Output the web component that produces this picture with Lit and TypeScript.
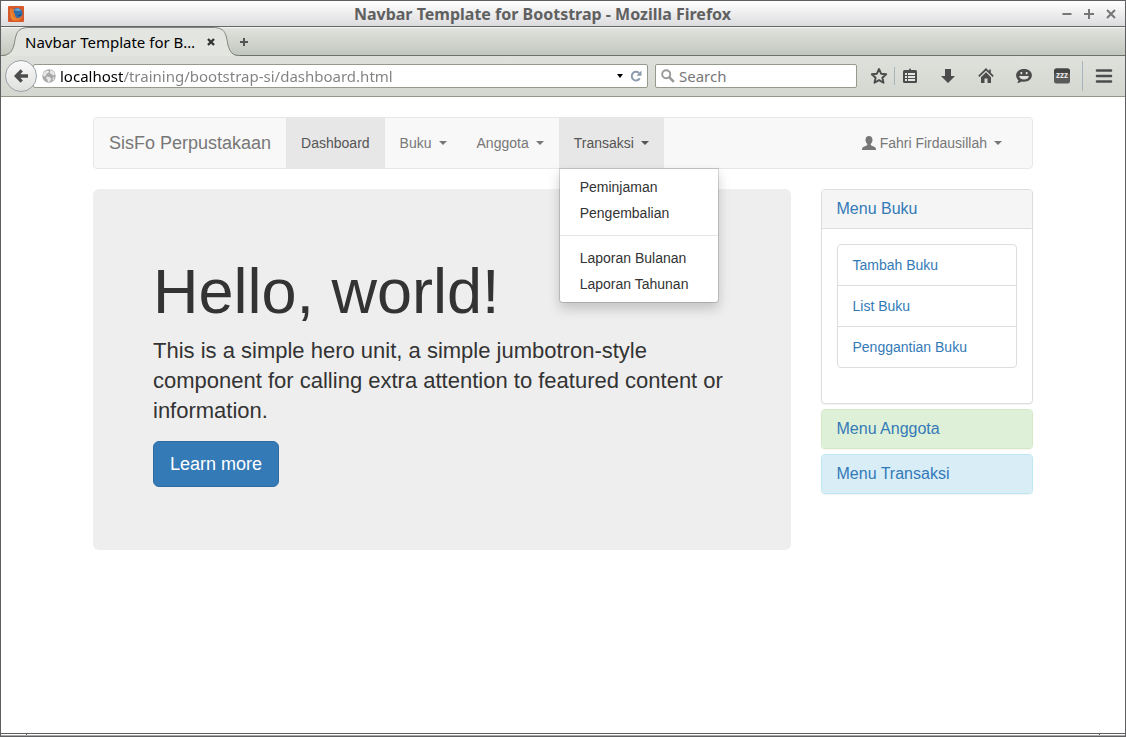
import { LitElement, html, css, svg } from "lit";
import { customElement, property } from "lit/decorators.js";
import { classMap } from "lit/directives/class-map.js";

interface MenuEntry {
  label: string;
  href?: string;
  menu?: boolean;
  state?: "active" | "open";
}

const navEntries: MenuEntry[] = [
  { label: "Dashboard", href: "#dashboard", state: "active" },
  { label: "Buku", menu: true },
  { label: "Anggota", menu: true },
  { label: "Transaksi", menu: true, state: "open" },
];

const transactionGroups = [
  ["Peminjaman", "Pengembalian"],
  ["Laporan Bulanan", "Laporan Tahunan"],
];

const panels = [
  { title: "Menu Buku", tone: "plain", items: ["Tambah Buku", "List Buku", "Penggantian Buku"] },
  { title: "Menu Anggota", tone: "success", items: [] as string[] },
  { title: "Menu Transaksi", tone: "info", items: [] as string[] },
];

const icon = (size: number, body: unknown) =>
  html`<svg width=${size} height=${size} viewBox="0 0 ${size} ${size}" aria-hidden="true">${body}</svg>`;

const icons = {
  back: icon(16, svg`<path d="M7.600 1.200 1 8l6.600 6.800 2.300-2.300L7.300 9.700H15V6.300H7.300l2.600-2.800z" fill="#4c4c4c"/>`),
  globe: icon(14, svg`<circle cx="7" cy="7" r="6.700" fill="#a9a9a9"/><path d="M2 3.500 4.500 1.500l2.500.6-.5 1.600-2 1-.8 2.100L2 7.500.8 6zM8.500 1l3 1.500 1.500 3-2 1-1.500-1.800-1.800-.4zM5 7.500l3 .8 1.200 1.900L7.500 13H6l-.6-2.500L4 9zM11 8.500l1.600-.5-1 3-1.200.6z" fill="#e8e8e8"/>`),
  reload: icon(12, svg`<path d="M9.800 8.300A4.300 4.300 0 1 1 9 3" fill="none" stroke="#8b9bab" stroke-width="2"/><path d="M11.500.5v5.200H6.300z" fill="#8b9bab"/>`),
  search: icon(14, svg`<circle cx="5.200" cy="5.200" r="4" fill="none" stroke="#999" stroke-width="1.900"/><path d="m8.200 8.200 4.600 4.600" stroke="#999" stroke-width="2.600"/>`),
  minimize: icon(12, svg`<path d="M1.500 6h9" stroke="#777" stroke-width="2"/>`),
  maximize: icon(12, svg`<path d="M1 6h10M6 1v10" stroke="#777" stroke-width="2"/>`),
  close: icon(12, svg`<path d="m2 2 8 8M10 2l-8 8" stroke="#777" stroke-width="2"/>`),
  tabClose: icon(8, svg`<path d="m1 1 6 6M7 1 1 7" stroke="#333" stroke-width="2.400"/>`),
  plus: icon(10, svg`<path d="M1 5h8M5 1v8" stroke="#555" stroke-width="2"/>`),
  user: icon(14, svg`<path d="M7 0c2.200 0 3.500 1.500 3.500 3.800 0 1.700-.7 3-1.600 3.900-.4.800-.2 1.400.5 1.700l3.300 1.500c.9.500 1.300 1.100 1.300 3.100H0c0-2 .4-2.600 1.300-3.100l3.300-1.500c.7-.3.900-.9.500-1.700C4.200 6.800 3.500 5.500 3.500 3.800 3.500 1.500 4.800 0 7 0z" fill="#777"/>`),
};

const toolbarIcons = [
  {
    name: "Downloads",
    art: icon(18, svg`<path d="M6 2h6v7h4l-7 7-7-7h4z" fill="#4c4c4c"/>`),
  },
  {
    name: "Home",
    art: icon(18, svg`<path d="m1.800 9.300 7.200-7 7.200 7M13 2.500v4" fill="none" stroke="#4c4c4c" stroke-width="1.700"/><path d="m9 5.200-5 5V16h3.500v-4.500h3V16H14v-5.800z" fill="#4c4c4c"/>`),
  },
  {
    name: "Start a conversation",
    art: icon(18, svg`<path d="M9 2c4.500 0 7.900 2.700 7.900 6.300S13.500 14.800 9 14.800c-.8 0-1.500-.1-2.200-.2-1.300.9-2.800 1.400-4.900 1.300.9-.7 1.400-1.500 1.500-2.700C2 12 1.100 10.300 1.100 8.300 1.100 4.700 4.500 2 9 2z" fill="#4c4c4c"/><path d="M5.500 5h1.700v2.300H5.500zM10.800 5h1.700v2.300h-1.700zM4 9h10c-.5 2.300-2.600 3.600-5 3.600S4.500 11.300 4 9z" fill="#dfe1dc"/>`),
  },
  {
    name: "Sleep tabs",
    art: icon(18, svg`<rect x="1" y="1.500" width="16" height="15" rx="2.500" fill="#5a5a5a"/><path d="M1 7V4a2.500 2.500 0 0 1 2.500-2.500h11A2.500 2.500 0 0 1 17 4v3z" fill="#444"/><text x="9" y="11" text-anchor="middle" font-family="Noto Sans" font-size="8" font-weight="700" fill="#e4e4e4">zzz</text>`),
  },
];

const starArt = icon(18, svg`<path d="m9 2 2.100 4.700 5.100.5-3.800 3.500 1.100 5L9 13.100l-4.500 2.600 1.100-5L1.800 7.200l5.100-.5z" fill="none" stroke="#4c4c4c" stroke-width="1.900" stroke-linejoin="round"/>`);
const clipboardArt = icon(18, svg`<path d="M6 3.500h1.500L9 1l1.500 2.500H12V5H6z" fill="#4c4c4c"/><rect x="2" y="3" width="14" height="13" rx="1.500" fill="#4c4c4c"/><path d="M4 7h2M7 7h7M4 10h2M7 10h7M4 13h2M7 13h7" stroke="#e4e6e1" stroke-width="2"/>`);
const menuArt = icon(18, svg`<path d="M2 3.500h14M2 9h14M2 14.500h14" stroke="#4c4c4c" stroke-width="2.600" stroke-linecap="round"/>`);

@customElement("browser-window")
export class BrowserWindow extends LitElement {
  @property() heading = "";
  @property() tab = "";
  @property() address = "";

  static styles = css`
    :host {
      display: flex;
      flex-direction: column;
      min-height: 100vh;
      box-sizing: border-box;
      border: 1px solid #5f5e60;
      background: #fff;
      font-family: "Noto Sans", "Open Sans", sans-serif;
      color: #000;
    }
    button, input {
      font: inherit;
      color: inherit;
      background: none;
      border: 0;
      padding: 0;
      margin: 0;
      min-width: 0;
    }
    button {
      display: inline-flex;
      align-items: center;
      justify-content: center;
      flex: none;
    }
    svg { display: block; }
    .titlebar {
      display: flex;
      align-items: center;
      height: 25px;
      padding: 0 8px 0 7px;
      background: linear-gradient(#fff, #dcdcde);
      border-bottom: 1px solid #666;
    }
    .controls { display: flex; gap: 10px; }
    .title {
      flex: 1;
      margin: 0;
      font-size: 16px;
      line-height: 22px;
      font-weight: 700;
      text-align: center;
      color: #606060;
      white-space: nowrap;
    }
    .tabs {
      display: flex;
      align-items: stretch;
      height: 29px;
      background: linear-gradient(#e2e4df, #c1c6bc);
      box-shadow: inset 0 1px #f3f4f2, inset 0 -1px #6e716b;
    }
    .tab {
      position: relative;
      display: flex;
      align-items: center;
      justify-content: space-between;
      box-sizing: border-box;
      width: 238px;
      padding: 0 24px;
    }
    .shape { position: absolute; left: 0; top: 0; }
    .tabname, .tabclose { position: relative; }
    .tabname { font-size: 15px; line-height: 20px; white-space: nowrap; }
    .newtab { width: 10px; }
    .toolbar {
      display: flex;
      align-items: center;
      height: 40px;
      padding: 0 6px 0 4px;
      background: linear-gradient(#dfe1dc, #d4d7d0);
      border-bottom: 1px solid #929889;
    }
    .back {
      width: 32px;
      height: 32px;
      border-radius: 50%;
      border: 1px solid #9aa1a8;
      background: linear-gradient(#fafafa, #dfe1dd);
      z-index: 1;
    }
    .field {
      display: flex;
      align-items: center;
      box-sizing: border-box;
      height: 24px;
      background: #fff;
      border: 1px solid #959b8c;
      border-radius: 2px;
      font-size: 15px;
    }
    .location { flex: 1; gap: 4px; margin-left: -4px; padding: 0 5px 0 8px; }
    .find { width: 202px; gap: 4px; margin-left: 7px; padding: 0 5px; }
    .field input { flex: 1; height: 22px; outline: 0; }
    .url {
      color: #808080;
      background: linear-gradient(90deg, #000 64px, #808080 64px);
      -webkit-background-clip: text;
      background-clip: text;
      -webkit-text-fill-color: transparent;
    }
    .find input::placeholder { color: #777; opacity: 1; }
    .history {
      border: 3px solid transparent;
      border-top: 4px solid #000;
      border-bottom: 0;
      margin-right: 3px;
    }
    .tools { display: flex; align-items: center; margin-left: 7px; }
    .tools button { width: 30px; height: 30px; }
    .addons { display: flex; gap: 8px; }
    .rule { width: 1px; height: 18px; background: #a9b5bc; }
    .rule.tall { height: 30px; margin: 0 6px 0 5px; }
    .page { flex: 1; }
    .frame {
      display: flex;
      justify-content: space-between;
      height: 1px;
      padding: 0 25px;
      border-top: 1px solid #5f5e60;
      border-bottom: 1px solid #aaa;
    }
    .grip { width: 1px; background: #5f5e60; }
  `;

  render() {
    return html`
      <header class="titlebar">
        <svg width="16" height="16" viewBox="0 0 16 16" aria-hidden="true">
          <rect width="16" height="16" rx="1" fill="#d6592b" />
          <circle cx="9" cy="7.500" r="5.500" fill="#2f6ca8" />
          <path d="M6 4c2-2 5-2 7 0l-2 1-3-.5z" fill="#67a9d8" />
          <path d="M2 2.500C3.500 3 5 3 6.500 4L5.500 5.500 7 8.500C7 10.500 8 12 10 12c2 0 3.500-1.500 4.500-3-.2 3-2.500 6-6.500 6-4.500 0-6.500-4-6-12.500z" fill="#e9782a" />
          <path d="M3 6c0 4 1.500 6.500 4.500 7.500C4.500 13.500 2.500 11 3 6z" fill="#f5b84a" />
          <path d="M10 9c1 .5 2 0 3-1-.3 2-2 2.800-3 1z" fill="#173b68" />
        </svg>
        <h1 class="title">${this.heading}</h1>
        <div class="controls">
          <button aria-label="Minimize">${icons.minimize}</button>
          <button aria-label="Maximize">${icons.maximize}</button>
          <button aria-label="Close">${icons.close}</button>
        </div>
      </header>
      <div class="tabs">
        <div class="tab">
          <svg class="shape" width="239" height="29" viewBox="0 0 239 29" aria-hidden="true">
            <path d="M0 29C8 29 11 25 13 18 15 8 15 .5 28 .5h184c13 0 13 7.500 15 17.500 2 7 4 11 12 11z" fill="#e3e5e0" />
            <path d="M0 28.500C8 28.500 11 25 13 18 15 8 15 .5 28 .5h184c13 0 13 7.500 15 17.500 2 7 4 10.500 12 10.500" fill="none" stroke="#80837c" />
          </svg>
          <span class="tabname">${this.tab}</span>
          <button class="tabclose" aria-label="Close tab">${icons.tabClose}</button>
        </div>
        <button class="newtab" aria-label="New tab">${icons.plus}</button>
      </div>
      <div class="toolbar">
        <button class="back" aria-label="Back">${icons.back}</button>
        <div class="field location">
          ${icons.globe}
          <input class="url" aria-label="Address" .value=${this.address} />
          <button class="history" aria-label="Show history"></button>
          <button aria-label="Reload">${icons.reload}</button>
        </div>
        <div class="field find">
          ${icons.search}
          <input type="search" aria-label="Search" placeholder="Search" />
        </div>
        <div class="tools">
          <button aria-label="Bookmark this page">${starArt}</button>
          <span class="rule"></span>
          <div class="addons">
            <button aria-label="Show bookmarks">${clipboardArt}</button>
            ${toolbarIcons.map((t) => html`<button aria-label=${t.name}>${t.art}</button>`)}
          </div>
          <span class="rule tall"></span>
          <button aria-label="Open menu">${menuArt}</button>
        </div>
      </div>
      <div class="page"><slot></slot></div>
      <div class="frame"><span class="grip"></span><span class="grip"></span></div>
    `;
  }
}

@customElement("app-root")
export class AppRoot extends LitElement {
  static styles = css`
    :host {
      display: block;
      font-family: "Liberation Sans", Arial, sans-serif;
      font-size: 14px;
      line-height: 20px;
      color: #333;
    }
    .container {
      box-sizing: border-box;
      max-width: 970px;
      margin: 0 auto;
      padding: 20px 15px;
      font-family: "Liberation Sans", Arial, sans-serif;
      color: #333;
    }
    a { color: #337ab7; text-decoration: none; }
    button { font: inherit; border: 0; background: none; margin: 0; cursor: pointer; }
    ul { list-style: none; margin: 0; padding: 0; }
    .navbar {
      display: flex;
      margin-bottom: 20px;
      background: #f8f8f8;
      border: 1px solid #e7e7e7;
      border-radius: 4px;
    }
    .brand { padding: 15px; font-size: 18px; color: #777; }
    .nav { display: flex; flex: 1; }
    .nav > li { position: relative; }
    .nav > .account { margin-left: auto; margin-right: 15px; }
    .link {
      display: flex;
      align-items: center;
      gap: 4px;
      padding: 15px;
      color: #777;
      white-space: nowrap;
    }
    .link.current { color: #555; background: #e7e7e7; }
    .caret {
      margin-left: 3px;
      border: 4px solid transparent;
      border-top-color: currentColor;
      border-bottom: 0;
    }
    .dropdown {
      position: absolute;
      top: 100%;
      left: 0;
      z-index: 10;
      box-sizing: border-box;
      min-width: 160px;
      padding: 5px 0;
      background: #fff;
      background-clip: padding-box;
      border: 1px solid rgba(0, 0, 0, 0.15);
      border-radius: 0 0 4px 4px;
      box-shadow: 0 6px 12px rgba(0, 0, 0, 0.175);
    }
    .dropdown ul + ul { margin-top: 9px; padding-top: 9px; border-top: 1px solid #e5e5e5; }
    .dropdown a { display: block; padding: 3px 20px; color: #333; white-space: nowrap; }
    .row { display: flex; align-items: flex-start; margin: 0 -15px; }
    .main, .aside { box-sizing: border-box; padding: 0 15px; }
    .main { width: 75%; }
    .aside { width: 25%; display: flex; flex-direction: column; align-items: stretch; gap: 5px; }
    .hero { padding: 68px 60px 63px; background: #eee; border-radius: 6px; }
    .hero h1 { margin: 0 0 10px; font-size: 63px; line-height: 69px; font-weight: 400; }
    .hero p { margin: 0 0 15px; font-size: 22px; line-height: 30px; }
    .cta {
      display: inline-block;
      padding: 10px 16px;
      border: 1px solid #2e6da4;
      border-radius: 6px;
      background: #337ab7;
      color: #fff;
      font-size: 18px;
      line-height: 24px;
      vertical-align: top;
    }
    .panel {
      background: #fff;
      border: 1px solid #ddd;
      border-radius: 4px;
      box-shadow: 0 1px 1px rgba(0, 0, 0, 0.05);
    }
    .panel h2 {
      margin: 0;
      padding: 10px 15px;
      font-size: 16px;
      line-height: 18px;
      font-weight: 400;
      background: #f5f5f5;
      border-radius: 3px;
    }
    .success { border-color: #d6e9c6; }
    .success h2 { background: #dff0d8; }
    .info { border-color: #bce8f1; }
    .info h2 { background: #d9edf7; }
    .body { padding: 15px 15px 35px; border-top: 1px solid #ddd; }
    .list { border: 1px solid #ddd; border-radius: 4px; }
    .list li + li { border-top: 1px solid #ddd; }
    .list a { display: block; padding: 10px 15px; }
  `;

  private entry(e: MenuEntry) {
    const classes = classMap({ link: true, current: !!e.state });
    return html`<li>
      ${e.menu
        ? html`<button class=${classes} aria-haspopup="true" aria-expanded=${e.state === "open"}>
            ${e.label}<span class="caret"></span>
          </button>`
        : html`<a class=${classes} href=${e.href ?? "#"}>${e.label}</a>`}
      ${e.state === "open"
        ? html`<div class="dropdown">
            ${transactionGroups.map(
              (group) => html`<ul>${group.map((label) => html`<li><a href="#transaksi">${label}</a></li>`)}</ul>`
            )}
          </div>`
        : null}
    </li>`;
  }

  render() {
    return html`
      <browser-window
        heading="Navbar Template for Bootstrap - Mozilla Firefox"
        tab="Navbar Template for B…"
        address="localhost/training/bootstrap-si/dashboard.html"
      >
        <div class="container">
          <nav class="navbar">
            <a class="brand" href="#home">SisFo Perpustakaan</a>
            <ul class="nav">
              ${navEntries.map((e) => this.entry(e))}
              <li class="account">
                <button class="link" aria-haspopup="true" aria-expanded="false">
                  ${icons.user}Fahri Firdausillah<span class="caret"></span>
                </button>
              </li>
            </ul>
          </nav>
          <div class="row">
            <main class="main">
              <section class="hero">
                <h1>Hello, world!</h1>
                <p>
                  This is a simple hero unit, a simple jumbotron-style component for calling extra attention to
                  featured content or information.
                </p>
                <a class="cta" href="#more">Learn more</a>
              </section>
            </main>
            <aside class="aside">
              ${panels.map(
                (p) => html`<section class="panel ${p.tone}">
                  <h2><a href="#panel">${p.title}</a></h2>
                  ${p.items.length
                    ? html`<div class="body">
                        <ul class="list">
                          ${p.items.map((label) => html`<li><a href="#buku">${label}</a></li>`)}
                        </ul>
                      </div>`
                    : null}
                </section>`
              )}
            </aside>
          </div>
        </div>
      </browser-window>
    `;
  }
}
